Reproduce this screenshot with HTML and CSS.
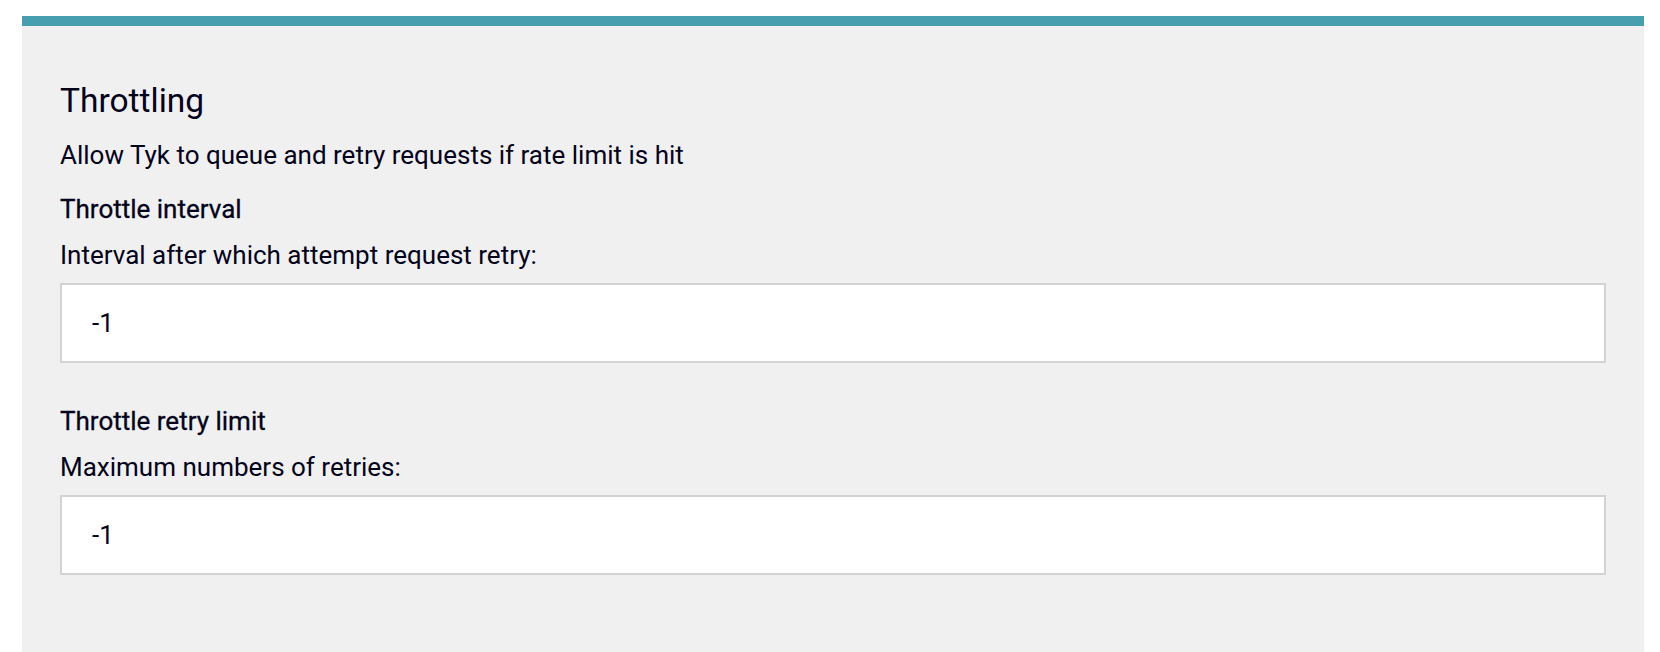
FILE: index.html
```html
<!DOCTYPE html>
<html lang="en">
<head>
<meta charset="utf-8">
<title>Throttling</title>
<link rel="stylesheet" href="styles.css">
</head>
<body>
<section class="panel">
  <h2 class="panel-title">Throttling</h2>
  <p class="panel-desc">Allow Tyk to queue and retry requests if rate limit is hit</p>
  <div class="field">
    <div class="field-label">Throttle interval</div>
    <label class="field-sub" for="interval">Interval after which attempt request retry:</label>
    <input class="field-input" id="interval" type="text" value="-1">
  </div>
  <div class="field">
    <div class="field-label">Throttle retry limit</div>
    <label class="field-sub" for="retries">Maximum numbers of retries:</label>
    <input class="field-input" id="retries" type="text" value="-1">
  </div>
</section>
</body>
</html>
```

FILE: styles.css
```css
html, body {
  margin: 0;
  padding: 0;
  background: #ffffff;
}

body {
  font-family: Roboto, "Liberation Sans", sans-serif;
  color: #03031c;
  height: 652px;
  overflow: hidden;
}

.panel {
  margin: 16px 16px 0 22px;
  border-top: 10px solid #479eae;
  background: #f0f0f0;
  padding: 55px 38px 0 38px;
  height: 636px;
  box-sizing: border-box;
}

.panel-title {
  margin: 0 0 16px 0;
  font-size: 33.5px;
  line-height: 40px;
  font-weight: 400;
}

.panel-desc {
  margin: 0 0 18px 0;
  font-size: 26px;
  line-height: 36px;
}

.field {
  display: flex;
  flex-direction: column;
  margin-bottom: 40px;
}

.field-label {
  font-size: 26px;
  line-height: 36px;
  font-weight: 400;
  margin-bottom: 10px;
  -webkit-text-stroke: 0.3px #03031c;
}

.field-sub {
  font-size: 26px;
  line-height: 36px;
  margin-bottom: 10px;
}

.field-input {
  box-sizing: border-box;
  width: 100%;
  height: 80px;
  border: 2px solid #d3d3d3;
  background: #ffffff;
  padding: 0 30px;
  font-family: Roboto, "Liberation Sans", sans-serif;
  font-size: 26px;
  color: #03031c;
  outline: none;
}
```
